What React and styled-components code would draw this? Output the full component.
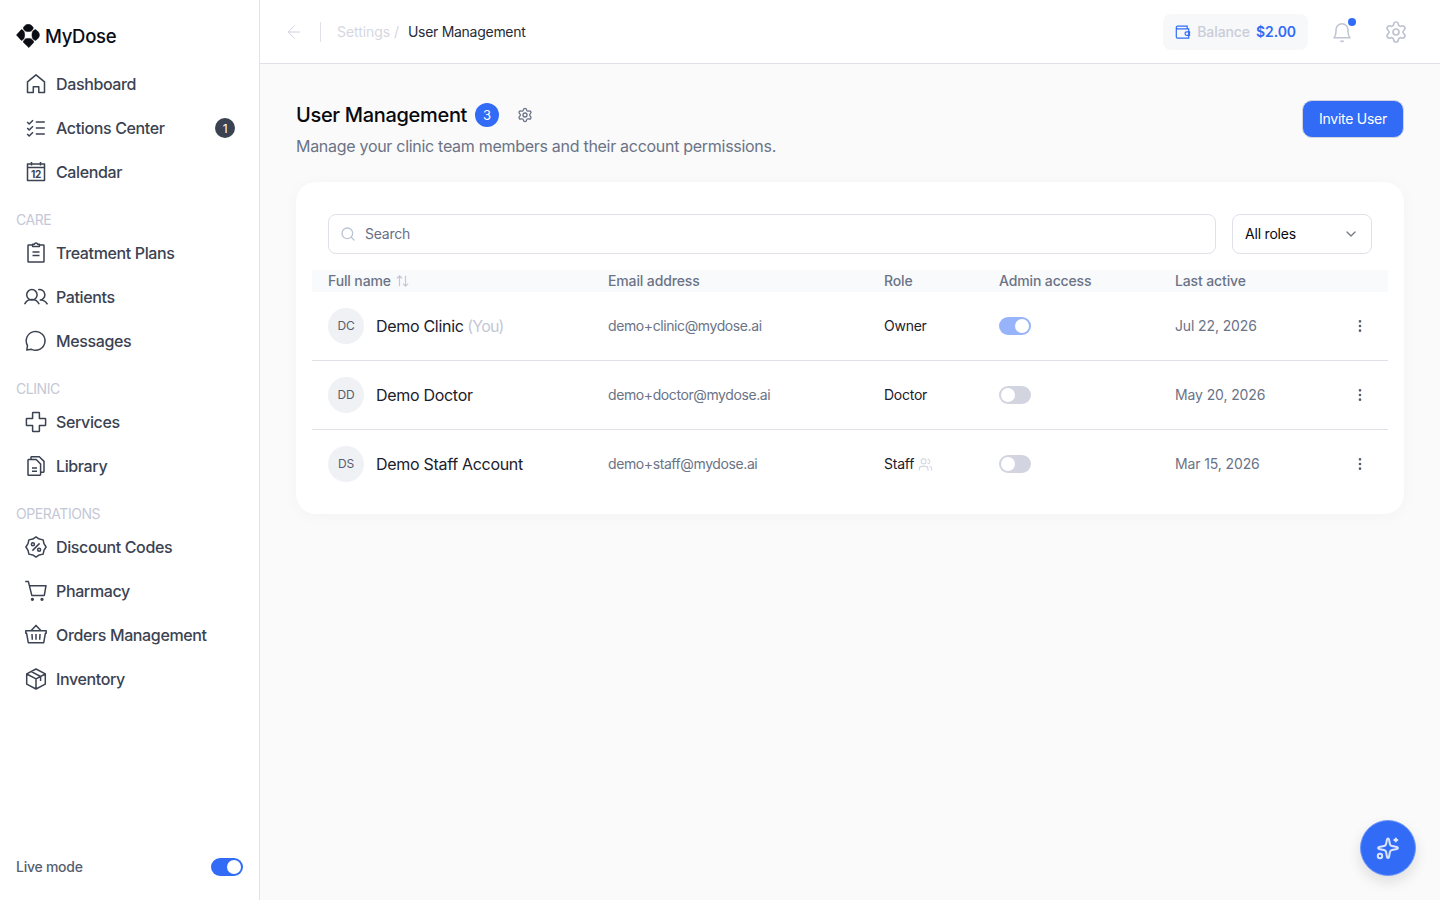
import React, { useState } from "react";
import styled, { createGlobalStyle } from "styled-components";
import { ArrowLeft, ChevronDown, EllipsisVertical, Search, Settings, Users } from "lucide-react";

const GlobalStyle = createGlobalStyle`
  * {
    box-sizing: border-box;
  }
  body {
    margin: 0;
    background: #fafafa;
    font-family: "Inter", "Liberation Sans", sans-serif;
    color: #3b4251;
  }
  button,
  input {
    font-family: inherit;
  }
`;

// 16 points around the centre, every second one pulled in
const badgePoints = Array.from({ length: 16 }, (_, i) => {
  const r = i % 2 ? 8.6 : 10.1;
  const a = (i * Math.PI) / 8;
  return `${(12 + r * Math.sin(a)).toFixed(2)},${(12 - r * Math.cos(a)).toFixed(2)}`;
}).join(" ");

const icons = {
  home: <path d="M3.5 9.8 12 2.8l8.500 7v10.7h-5.700v-5.800H9.300v5.800H3.500z" />,
  checks: (
    <path d="M3.2 6l2 2L9 4.3M3.2 12l2 2L9 10.3M3.2 18l2 2L9 16.3M11.8 6h9M11.8 12h9M11.8 18h9" />
  ),
  calendar: (
    <>
      <path d="M3.5 3.9h17v16.600h-17zM3.5 7.500h17M7.500 2v3.600M16.500 2v3.600" />
      <text x="12" y="17.9" textAnchor="middle">
        12
      </text>
    </>
  ),
  clipboard: (
    <path d="M8.4 3.9H4.6a.6.6 0 0 0-.6.6v16c0 .3.3.6.6.6h14.8c.3 0 .6-.3.6-.6v-16a.6.6 0 0 0-.6-.6h-3.8M8.6 5.4V3.2h1.7a1.8 1.8 0 0 1 3.4 0h1.7v2.2zM8.500 11h7M8.500 14.500h7" />
  ),
  people: (
    <>
      <circle cx="7.9" cy="9.8" r="5.2" />
      <path d="M.6 19.3a8 8 0 0 1 14.6 0M14.2 4.8a5.2 5.2 0 1 1 1.5 10.2M16.6 15a8.2 8.2 0 0 1 6.8 4.3" />
    </>
  ),
  message: <path d="M2.800 21.100 3.500 16.600a9.400 9.400 0 1 1 4 3.700z" />,
  cross: (
    <path d="M9.1 2.4h5.8c.3 0 .5.2.5.5v5.700h5.700c.3 0 .5.2.5.5v5.800c0 .3-.2.5-.5.5h-5.700v5.700c0 .3-.2.5-.5.5H9.1a.5.5 0 0 1-.5-.5v-5.700H2.900a.5.5 0 0 1-.5-.5V9.100c0-.3.2-.5.5-.5h5.700V2.900c0-.3.2-.5.5-.5z" />
  ),
  files: (
    <path d="M4 6.2c0-.4.3-.7.7-.7h7.5l4.4 4.6v10.5c0 .4-.3.7-.7.7H4.7a.7.7 0 0 1-.7-.7zM7 5.3V3.4c0-.4.3-.7.7-.7h7.6L20 7.4v10.2c0 .4-.3.7-.7.7h-2.500M8 14h5M8 17.200h5" />
  ),
  discount: (
    <>
      <polygon points={badgePoints} />
      <circle cx="8.900" cy="9.200" r="1.500" />
      <circle cx="15.100" cy="14.800" r="1.500" />
      <path d="m8.400 15.600 7.200-7.200" />
    </>
  ),
  cart: (
    <>
      <path d="M1.2 2.600h3.200l3.400 13.800h12.500L22 6.700H5.400" />
      <circle cx="8.4" cy="20.300" r=".9" fill="currentColor" />
      <circle cx="18" cy="20.300" r=".9" fill="currentColor" />
    </>
  ),
  basket: (
    <path d="M1.800 7.700h20.400v2.600h-.8l-1.700 9.400H4.300l-1.700-9.400h-.8zM7.200 7.500 12 2.400l4.800 5.100M8 11l.3 5.700M12 11v5.700M16 11l-.3 5.700" />
  ),
  box: (
    <path d="M12 2 21.300 6.900v10.200L12 22l-9.300-4.900V6.900zM2.800 7 12 11.800 21.200 7M12 11.800V22M7.400 4.600l9.200 4.900v4.600" />
  ),
};

const menu = [
  {
    items: [
      { label: "Dashboard", icon: "home" },
      { label: "Actions Center", icon: "checks", count: 1 },
      { label: "Calendar", icon: "calendar" },
    ],
  },
  {
    title: "CARE",
    items: [
      { label: "Treatment Plans", icon: "clipboard" },
      { label: "Patients", icon: "people" },
      { label: "Messages", icon: "message" },
    ],
  },
  {
    title: "CLINIC",
    items: [
      { label: "Services", icon: "cross" },
      { label: "Library", icon: "files" },
    ],
  },
  {
    title: "OPERATIONS",
    items: [
      { label: "Discount Codes", icon: "discount" },
      { label: "Pharmacy", icon: "cart" },
      { label: "Orders Management", icon: "basket" },
      { label: "Inventory", icon: "box" },
    ],
  },
];

const users = [
  { initials: "DC", name: "Demo Clinic", you: true, email: "demo+clinic@mydose.ai", role: "Owner", admin: true, active: "Jul 22, 2026" },
  { initials: "DD", name: "Demo Doctor", email: "demo+doctor@mydose.ai", role: "Doctor", active: "May 20, 2026" },
  { initials: "DS", name: "Demo Staff Account", email: "demo+staff@mydose.ai", role: "Staff", shared: true, active: "Mar 15, 2026" },
];

const Toggle = ({ on, disabled, onClick }) => (
  <Track $on={on} $disabled={disabled} onClick={onClick}>
    <Thumb />
  </Track>
);

const App = () => {
  const [searchValue, setSearchValue] = useState("");
  const [live, setLive] = useState(true);

  return (
    <Layout>
      <GlobalStyle />
      <Sidebar>
        <Brand>
          <LogoMark viewBox="0 0 24 24">
            <path d="M7.300 3.800C9.800-.9 14.800-.9 17.300 3.800 16.800 6 15.600 7 14.600 7.200a9 9 0 0 1-4.600 0C9 7 7.800 6 7.300 3.800z" />
            <path d="M19.400 5.600c5.300 2.900 5.300 7.900 0 10.800-1.900-.7-2.800-1.700-3-2.700a9 9 0 0 1 0-5.400c.2-1 1.100-2 3-2.700z" />
            <path d="M5.400 5.600.500 11l4.900 5.400c1.900-.7 2.600-1.700 2.800-2.700a9 9 0 0 0 0-5.400C8 7.300 7.300 6.300 5.400 5.600z" />
            <path d="M7.300 18.200 12.900 23.600l4.900-5.400c-.5-1.900-1.900-3.200-3.200-3.500a9 9 0 0 0-4.600 0c-1.200.3-2.200 1.600-2.700 3.500z" />
          </LogoMark>
          MyDose
        </Brand>
        <Nav>
          {menu.map((group, i) => (
            <div key={i}>
              {group.title && <GroupTitle>{group.title}</GroupTitle>}
              {group.items.map((item) => (
                <NavItem key={item.label}>
                  <NavIcon viewBox="0 0 24 24">{icons[item.icon]}</NavIcon>
                  {item.label}
                  {item.count && <NavCount>{item.count}</NavCount>}
                </NavItem>
              ))}
            </div>
          ))}
        </Nav>
        <LiveMode>
          <span>Live mode</span>
          <Toggle on={live} onClick={() => setLive(!live)} />
        </LiveMode>
      </Sidebar>

      <Main>
        <Topbar>
          <BackIcon size={20} strokeWidth={1.2} />
          <Divider />
          <Crumb>Settings /</Crumb>
          <CurrentCrumb>User Management</CurrentCrumb>
          <Balance>
            <svg width="16" height="16" viewBox="0 0 16 16">
              <path d="M12.200 4.700V2.200H2.500A1.200 1.200 0 0 0 1.300 3.400V13c0 .7.500 1.200 1.200 1.200h11.200V4.900H2.500c-.7 0-1.200-.6-1.200-1.300M14.500 7.800h-2.700a1.800 1.800 0 0 0 0 3.600h2.700z" />
            </svg>
            <span>Balance</span>
            <Amount>$2.00</Amount>
          </Balance>
          <BellButton>
            <svg width="24" height="24" viewBox="0 0 24 24">
              <path d="M4 17.800h16c-1.500-1.600-2-3.400-2-6.300V9.800a6 6 0 0 0-12 0v1.700c0 2.900-.5 4.700-2 6.300zM10.400 20.600c.7 1.100 2.500 1.100 3.200 0" />
            </svg>
            <BellDot />
          </BellButton>
          <Settings size={24} strokeWidth={1.7} color="#bfc4d2" />
        </Topbar>

        <Content>
          <PageHead>
            <div>
              <TitleRow>
                <Title>User Management</Title>
                <TitleCount>3</TitleCount>
                <Settings size={16} strokeWidth={2} color="#6b7386" />
              </TitleRow>
              <Subtitle>Manage your clinic team members and their account permissions.</Subtitle>
            </div>
            <InviteButton>Invite User</InviteButton>
          </PageHead>

          <Card>
            <Filters>
              <SearchBox>
                <Search size={16} strokeWidth={2} color="#bcc4d4" />
                <input
                  placeholder="Search"
                  value={searchValue}
                  onChange={(e) => setSearchValue(e.target.value)}
                />
              </SearchBox>
              <RoleSelect>
                <span>All roles</span>
                <ChevronDown size={16} strokeWidth={2} color="#777b84" />
              </RoleSelect>
            </Filters>
            <HeadRow>
              <span>
                Full name
                <svg width="14" height="12" viewBox="0 0 14 12">
                  <path d="M3.500 11.300V1M.9 3.400 3.500.9l2.600 2.500M9.500.7V11M6.900 8.600l2.600 2.500 2.600-2.500" />
                </svg>
              </span>
              <span>Email address</span>
              <span>Role</span>
              <span>Admin access</span>
              <span>Last active</span>
            </HeadRow>
            {users.map((user) => (
              <UserRow key={user.initials}>
                <Person>
                  <Avatar>{user.initials}</Avatar>
                  <span>
                    {user.name}
                    {user.you && <You> (You)</You>}
                  </span>
                </Person>
                <Email>{user.email}</Email>
                <Role>
                  <span>{user.role}</span>
                  {user.shared && <Users size={15} strokeWidth={1.7} color="#d3d6e0" />}
                </Role>
                <Toggle on={user.admin} disabled={user.admin} />
                <Muted>{user.active}</Muted>
                <RowMenu>
                  <EllipsisVertical size={16} strokeWidth={2} />
                </RowMenu>
              </UserRow>
            ))}
          </Card>
        </Content>
      </Main>

      <AssistantButton>
        <svg width="28" height="28" viewBox="0 0 28 28">
          <path d="M14 4.500c.5 0 .9.4 1 .9l.9 4.600c.2 1.100 1 1.900 2.100 2.100l5 .9c1.200.2 1.200 1.800 0 2l-5 .9c-1.100.2-1.900 1-2.100 2.100l-.9 5c-.2 1.200-1.800 1.200-2 0l-.9-5c-.2-1.100-1-1.900-2.100-2.100l-5-.9c-1.200-.2-1.200-1.800 0-2l5-.9c1.100-.2 1.900-1 2.100-2.100l.9-4.600c.1-.5.5-.9 1-.9z" />
          <path d="M21.800 3.700v4.600M19.500 6h4.600" />
          <circle cx="6" cy="22" r="2.200" />
        </svg>
      </AssistantButton>
    </Layout>
  );
};

export default App;

const Layout = styled.div`
  display: flex;
  height: 100vh;
  overflow: hidden;
`;

const Sidebar = styled.aside`
  display: flex;
  flex-direction: column;
  width: 260px;
  flex-shrink: 0;
  background: #fff;
  border-right: 1px solid #e2e3e9;
`;

const Brand = styled.div`
  display: flex;
  align-items: center;
  gap: 5px;
  height: 62px;
  padding: 10px 16px 0;
  color: #0b0d14;
  font-size: 18.5px;
  font-weight: 500;
  letter-spacing: -0.3px;
`;

const LogoMark = styled.svg`
  width: 24px;
  height: 24px;
  fill: #0b0d14;
  stroke: #0b0d14;
  stroke-width: 0.6;
  stroke-linejoin: round;
`;

const Nav = styled.nav`
  flex: 1;
`;

const GroupTitle = styled.div`
  height: 37px;
  padding: 17px 16px 0;
  color: #c4c8d6;
  font-size: 14px;
  line-height: 18px;
  letter-spacing: -0.45px;
`;

const NavItem = styled.a`
  display: flex;
  align-items: center;
  gap: 8px;
  height: 44px;
  padding: 0 24px;
  color: #3b4251;
  font-size: 16px;
  font-weight: 500;
  letter-spacing: -0.37px;
  cursor: pointer;
`;

const NavIcon = styled.svg`
  width: 24px;
  height: 24px;
  fill: none;
  stroke: #3b4251;
  stroke-width: 1.5;
  stroke-linejoin: round;

  text {
    fill: #3b4251;
    stroke: none;
    font-size: 10px;
    font-weight: 700;
    letter-spacing: -0.2px;
  }
`;

const NavCount = styled.span`
  display: flex;
  align-items: center;
  justify-content: center;
  width: 20px;
  height: 20px;
  margin-left: auto;
  border-radius: 50%;
  background: #3b4251;
  color: #fff;
  font-size: 12px;
  font-weight: 400;
`;

const LiveMode = styled.div`
  display: flex;
  align-items: center;
  justify-content: space-between;
  height: 66px;
  padding: 0 16px;
  color: #565e70;
  font-size: 14px;
  font-weight: 500;
  letter-spacing: -0.25px;

  span {
    margin-bottom: 2px;
  }
  button span {
    margin: 0;
  }
`;

const Track = styled.button`
  display: flex;
  justify-content: ${(p) => (p.$on ? "flex-end" : "flex-start")};
  width: 32px;
  height: 18px;
  padding: 2px;
  border: none;
  border-radius: 9px;
  background: ${(p) => (p.$on ? "#316bf6" : "#d2d5e0")};
  opacity: ${(p) => (p.$disabled ? 0.5 : 1)};
`;

const Thumb = styled.span`
  width: 14px;
  height: 14px;
  border-radius: 50%;
  background: #fff;
`;

const Main = styled.main`
  flex: 1;
  min-width: 0;
`;

const Topbar = styled.header`
  display: flex;
  align-items: center;
  height: 64px;
  padding: 0 32px 0 24px;
  background: #fff;
  border-bottom: 1px solid #dfe1e9;
  font-size: 14px;
`;

const BackIcon = styled(ArrowLeft)`
  color: #cfd2de;
`;

const Divider = styled.div`
  width: 1px;
  height: 20px;
  margin: 0 16px;
  background: #dfe1e9;
`;

const Crumb = styled.span`
  color: #d5d7e1;
  letter-spacing: -0.07px;
`;

const CurrentCrumb = styled.span`
  padding-left: 9px;
  color: #262b38;
  letter-spacing: -0.28px;
`;

const Balance = styled.div`
  display: flex;
  align-items: center;
  gap: 6px;
  height: 36px;
  margin-left: auto;
  padding: 0 12px;
  border-radius: 8px;
  background: #f7f8fa;
  color: #c9cdd9;
  font-weight: 500;
  letter-spacing: -0.08px;

  svg {
    fill: none;
    stroke: #316bf6;
    stroke-width: 1.2;
  }
`;

const Amount = styled.span`
  color: #316bf6;
  font-weight: 600;
`;

const BellButton = styled.div`
  position: relative;
  display: flex;
  margin: 0 30px 0 22px;

  svg {
    fill: none;
    stroke: #bfc4d2;
    stroke-width: 1.5;
    stroke-linejoin: round;
  }
`;

const BellDot = styled.span`
  position: absolute;
  top: -2px;
  right: -2px;
  width: 8px;
  height: 8px;
  border-radius: 50%;
  background: #316bf6;
`;

const Content = styled.div`
  padding: 36px;
`;

const PageHead = styled.div`
  display: flex;
  align-items: flex-start;
  justify-content: space-between;
  height: 82px;
`;

const TitleRow = styled.div`
  display: flex;
  align-items: center;
  height: 30px;
`;

const Title = styled.h1`
  margin: 0;
  color: #08090d;
  font-size: 20px;
  font-weight: 500;
  letter-spacing: -0.32px;
`;

const TitleCount = styled.span`
  display: flex;
  align-items: center;
  justify-content: center;
  width: 24px;
  height: 24px;
  margin: 0 18px 0 8px;
  border-radius: 50%;
  background: #316bf6;
  color: #fff;
  font-size: 13px;
`;

const Subtitle = styled.p`
  margin: 4px 0 0;
  color: #6b7386;
  font-size: 16px;
  line-height: 24px;
  letter-spacing: -0.29px;
`;

const InviteButton = styled.button`
  width: 102px;
  height: 38px;
  padding: 0 0 2px;
  border: 1px solid #d2d5e0;
  border-radius: 10px;
  background: #316bf6;
  color: #fff;
  font-size: 14px;
  letter-spacing: -0.25px;
`;

const Card = styled.section`
  height: 332px;
  padding: 32px 16px 16px;
  border-radius: 20px;
  background: #fff;
  box-shadow: 0 2px 16px rgba(20, 20, 30, 0.03);
`;

const Filters = styled.div`
  display: flex;
  gap: 16px;
  padding: 0 16px 16px;
`;

const SearchBox = styled.div`
  display: flex;
  align-items: center;
  flex: 1;
  gap: 9px;
  height: 40px;
  padding: 0 11px;
  border: 1px solid #dfe1e9;
  border-radius: 8px;

  input {
    flex: 1;
    padding: 0 0 2px;
    border: none;
    outline: none;
    font-size: 14px;
    letter-spacing: -0.25px;
  }
  input::placeholder {
    color: #667085;
  }
`;

const RoleSelect = styled.div`
  display: flex;
  align-items: center;
  justify-content: space-between;
  width: 140px;
  height: 40px;
  padding: 0 12px;
  border: 1px solid #dfe1e9;
  border-radius: 8px;
  color: #08090d;
  font-size: 14px;
  letter-spacing: -0.2px;

  span {
    margin-bottom: 2px;
  }
`;

const Row = styled.div`
  display: grid;
  grid-template-columns: 280px 276px 115px 176px 1fr 56px;
  align-items: center;
  padding-left: 16px;
  font-size: 14px;
`;

const HeadRow = styled(Row)`
  height: 22px;
  padding-bottom: 2px;
  background: #f9fafc;
  color: #6b7386;
  font-weight: 500;
  letter-spacing: -0.13px;

  svg {
    margin: 0 0 -1px 5px;
    fill: none;
    stroke: #c4c8d6;
    stroke-width: 1.2;
  }
`;

const UserRow = styled(Row)`
  height: 69px;
  border-bottom: 1px solid #dfe1e9;

  &:last-child {
    border-bottom-color: transparent;
  }
`;

const Person = styled.div`
  display: flex;
  align-items: center;
  gap: 12px;
  color: #1c202b;
  font-size: 16px;
  letter-spacing: -0.3px;
`;

const Avatar = styled.span`
  display: flex;
  align-items: center;
  justify-content: center;
  width: 36px;
  height: 36px;
  padding-bottom: 1px;
  border-radius: 50%;
  background: #f0f1f5;
  color: #565e70;
  font-size: 12px;
  letter-spacing: -0.1px;
`;

const You = styled.span`
  color: #c4c8d6;
  letter-spacing: -0.8px;
`;

const Muted = styled.span`
  margin-bottom: 2px;
  color: #6b7386;
  letter-spacing: -0.12px;
`;

const Email = styled(Muted)`
  letter-spacing: -0.4px;
`;

const Role = styled.span`
  display: flex;
  align-items: center;
  gap: 4px;
  color: #1c202b;
  letter-spacing: -0.25px;

  span {
    margin-bottom: 2px;
  }
`;

const RowMenu = styled.span`
  display: flex;
  justify-content: center;
  color: #565e70;
`;

const AssistantButton = styled.button`
  position: fixed;
  right: 24px;
  bottom: 24px;
  display: flex;
  align-items: center;
  justify-content: center;
  width: 56px;
  height: 56px;
  padding: 0;
  border: 1px solid #6f97f8;
  border-radius: 50%;
  background: #316bf6;
  box-shadow: 0 6px 14px rgba(20, 20, 30, 0.12);

  svg {
    fill: none;
    stroke: #dbe5fe;
    stroke-width: 2;
    stroke-linejoin: round;
  }
`;
